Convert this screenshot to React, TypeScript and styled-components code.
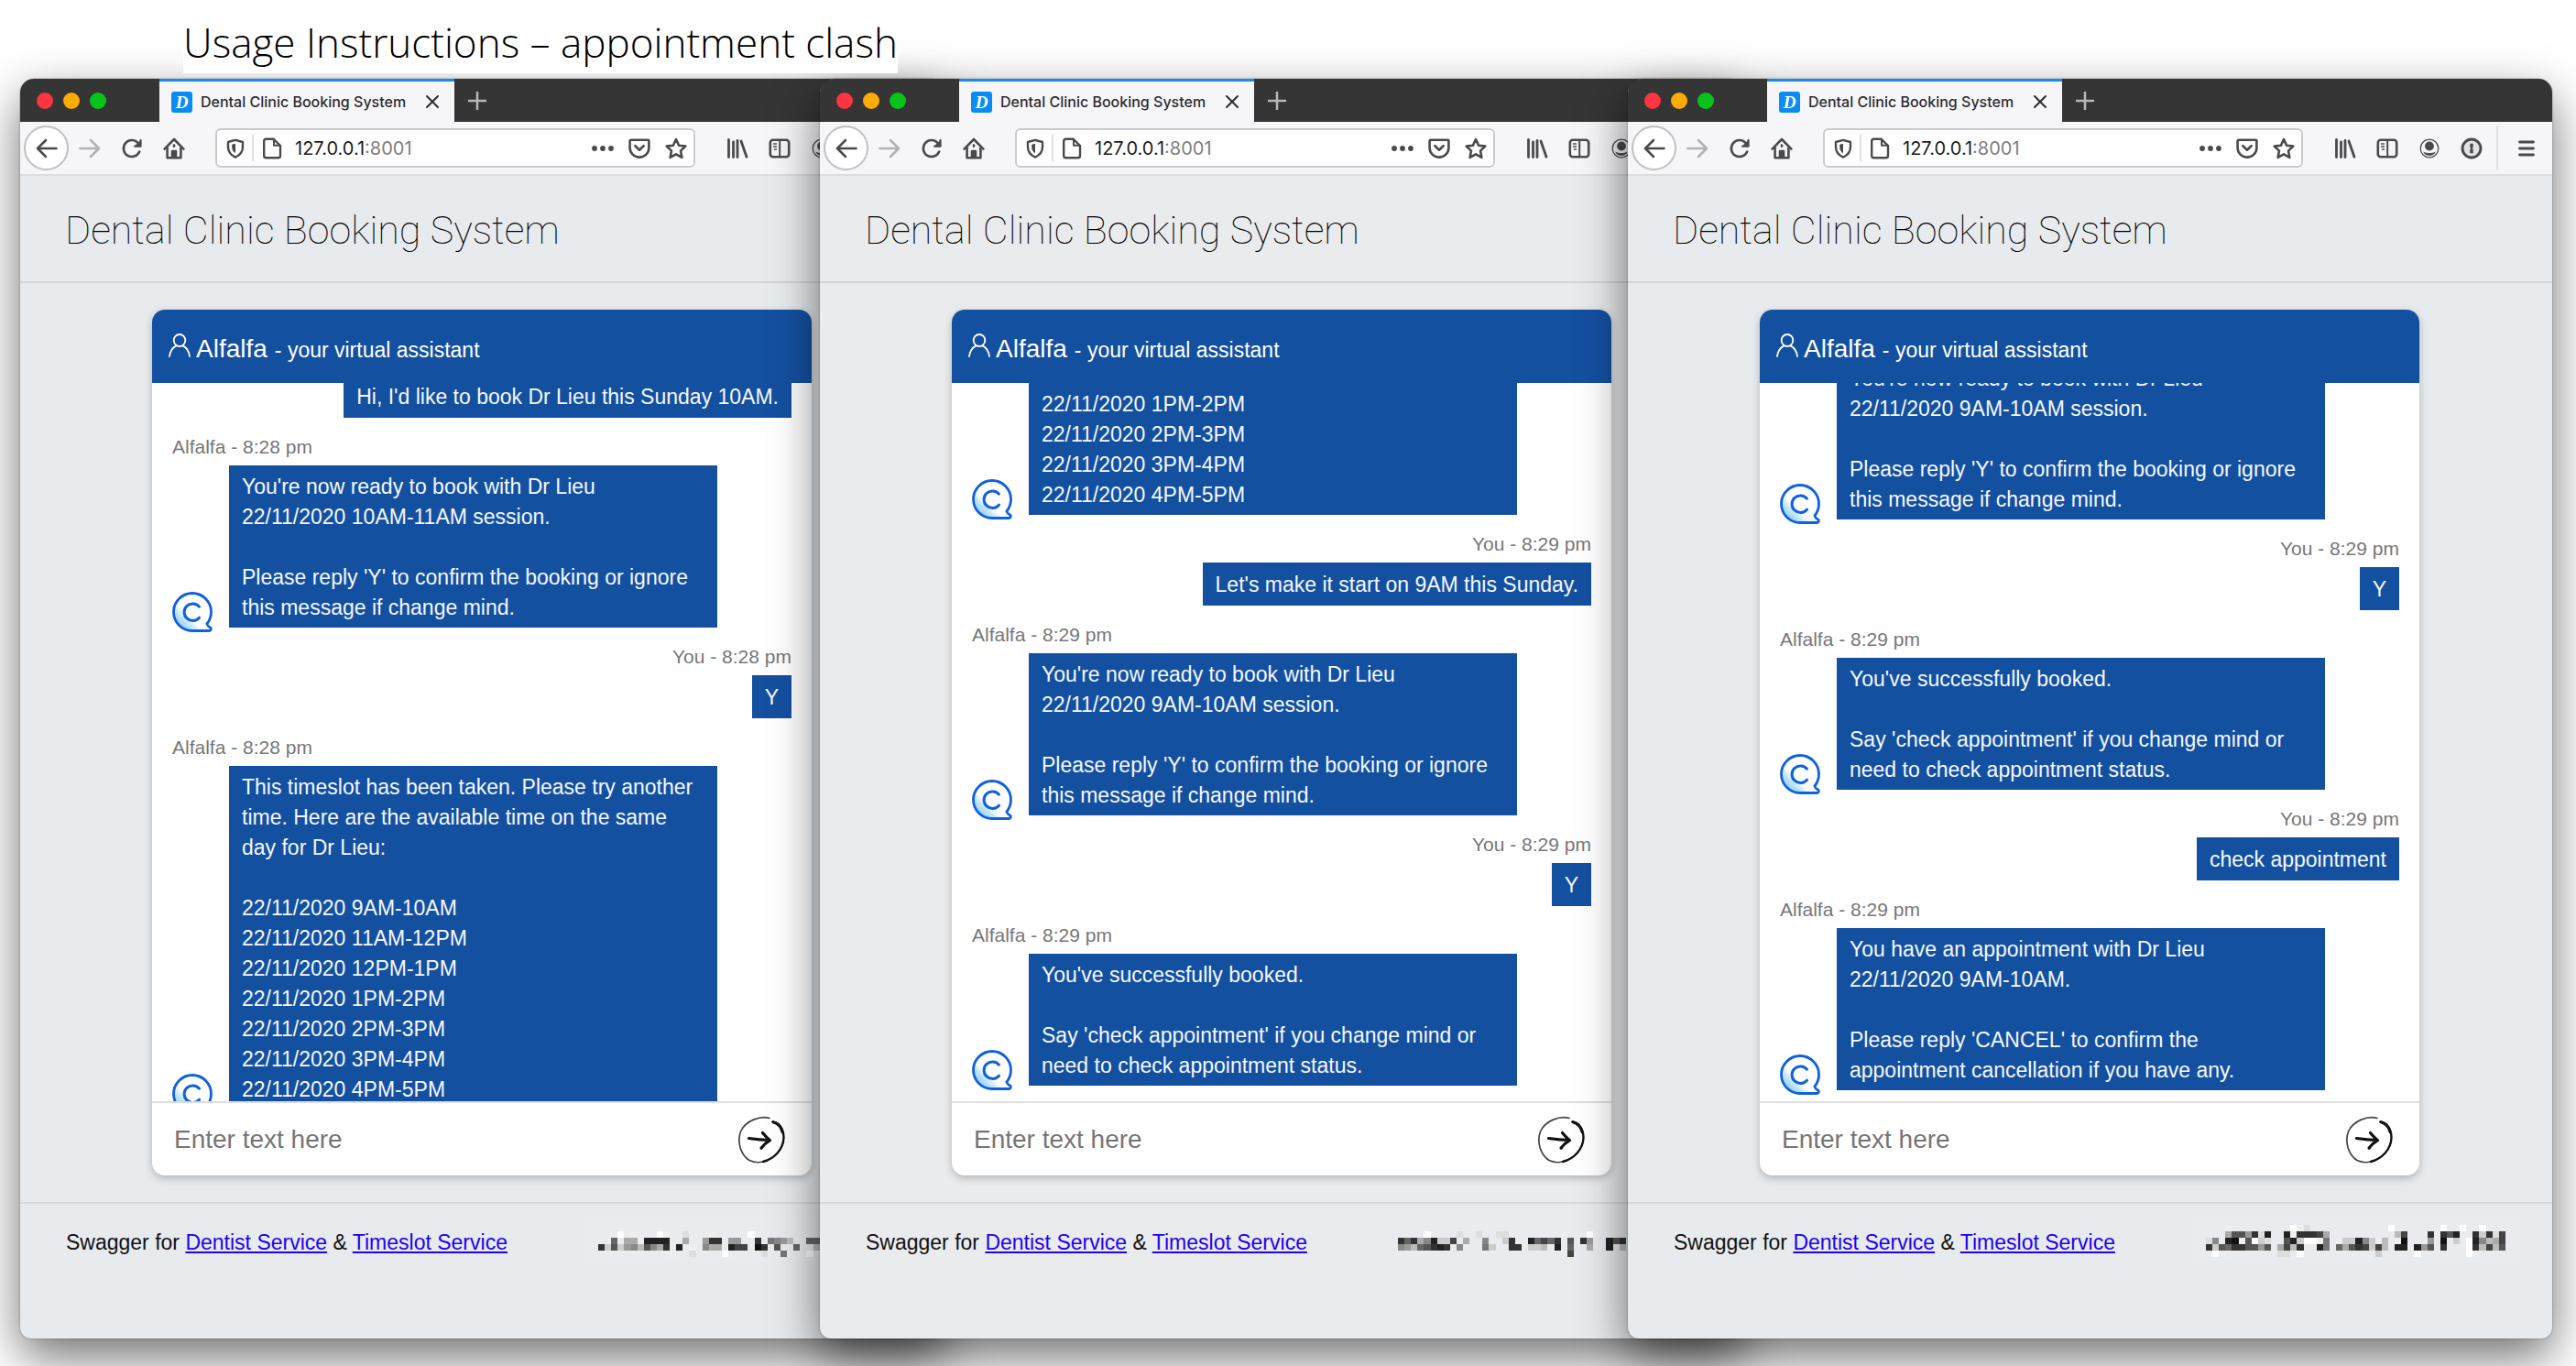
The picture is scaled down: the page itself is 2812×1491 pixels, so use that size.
import React, { useId, useLayoutEffect, useRef } from "react";
import styled, { createGlobalStyle } from "styled-components";

const sans = `"Liberation Sans", Arial, Helvetica, sans-serif`;
const ui = `Inter, Roboto, sans-serif`;
const brand = "#1450a0";
const ink = "#4a4a4d";

const GlobalStyle = createGlobalStyle`
  *, *::before, *::after { box-sizing: border-box; }
  body { margin: 0; background: #fff; font-family: ${sans}; }
  button { margin: 0; padding: 0; border: 0; background: none; color: inherit; cursor: pointer; }
  svg { display: block; flex: none; }
`;

const Desktop = styled.main`
  display: flex;
  flex-direction: column;
  height: 100vh;
  min-height: 900px;
  padding-bottom: 30px;
  overflow: hidden;
`;

const SlideTitle = styled.h1`
  position: relative;
  z-index: 1;
  align-self: flex-start;
  margin: 0 0 6px 200px;
  padding-top: 14px;
  height: 80px;
  background: #fff;
  color: #000;
  font: 300 44px/64px "Open Sans", "Noto Sans", sans-serif;
  white-space: nowrap;
`;

const Windows = styled.div`
  flex: 1;
  min-height: 0;
  display: grid;
  grid-template-columns: 873fr 882fr 1009fr;
  grid-template-rows: 100%;
  padding: 0 26px 0 22px;
`;

const Frame = styled.section<{ $overlap: number; $tone: string }>`
  position: relative;
  display: flex;
  flex-direction: column;
  min-width: 0;
  margin-right: -${(p) => p.$overlap}px;
  border-radius: 16px 16px 12px 12px;
  background: ${(p) => p.$tone};
  box-shadow: 0 0 2px rgba(0, 0, 0, 0.45), 0 20px 52px rgba(0, 0, 0, 0.56);
`;

const TabStrip = styled.div`
  display: flex;
  align-items: center;
  height: 47px;
  padding-left: 18px;
  border-radius: 15px 15px 0 0;
  background: #353535;
`;

const Lights = styled.div`
  display: flex;
  gap: 11px;
  width: 134px;
`;

const Light = styled.button<{ $color: string }>`
  width: 18px;
  height: 18px;
  border-radius: 50%;
  background: ${(p) => p.$color};
`;

const Tab = styled.div`
  display: flex;
  align-items: center;
  width: 322px;
  height: 47px;
  padding: 0 16px 0 13px;
  border-top: 3px solid #1b8ce6;
  background: #f6f6f9;
  color: #2c2c2e;
  font: 500 16px/24px ${ui};
`;

const Favicon = styled.span`
  display: grid;
  place-items: center;
  width: 23px;
  height: 23px;
  margin-right: 9px;
  border-radius: 3px;
  background: #0a8cf2;
  color: #fff;
  font: italic 700 19px/23px "Liberation Serif", serif;
`;

const TabName = styled.span`
  flex: 1;
  white-space: nowrap;
`;

const NewTab = styled.button`
  display: grid;
  place-items: center;
  width: 50px;
  height: 47px;
`;

const Toolbar = styled.div`
  display: flex;
  align-items: center;
  height: 59px;
  padding: 0 5px 0 4px;
  border-bottom: 2px solid #dddde0;
  background: #f6f6f9;
  color: ${ink};
`;

const BackButton = styled.button`
  display: grid;
  place-items: center;
  flex: none;
  width: 49px;
  height: 49px;
  border: 2px solid #c0c0c2;
  border-radius: 50%;
  background: #fff;
`;

const ToolButton = styled.button<{ $dim?: boolean }>`
  display: grid;
  place-items: center;
  flex: none;
  width: 46px;
  height: 46px;
  color: ${(p) => (p.$dim ? "#b2b2b4" : ink)};
`;

const Address = styled.div`
  display: flex;
  align-items: center;
  flex: 1;
  min-width: 0;
  height: 43px;
  margin: 0 23px 0 22px;
  padding: 0 7px 0 8px;
  border: 2px solid #cbcbcd;
  border-radius: 6px;
  background: #fff;
`;

const Rule = styled.span<{ $tall?: boolean }>`
  flex: none;
  width: 2px;
  height: ${(p) => (p.$tall ? 49 : 29)}px;
  margin: 0 8px 0 ${(p) => (p.$tall ? 4 : 6)}px;
  background: #dfdfe1;
`;

const Url = styled.div`
  flex: 1;
  margin-left: 13px;
  color: #7e7e80;
  font: 400 20px/28px ${ui};
  outline: none;
  white-space: nowrap;
`;

const Host = styled.span`
  color: #1c1c1e;
`;

const AddressActions = styled.div`
  display: flex;
  gap: 16px;
`;

const PageHeader = styled.header`
  height: 117px;
  padding: 32px 50px 0 49px;
  border-bottom: 2px solid #d3d6d8;
`;

const PageTitle = styled.h2`
  margin: 0;
  color: #000;
  font: 100 43px/54px Roboto, Inter, sans-serif;
  white-space: nowrap;
`;

const PageMain = styled.div`
  flex: 1;
  min-height: 0;
  display: flex;
  justify-content: center;
  padding: 29px 21px 29px 20px;
`;

const Card = styled.article`
  display: flex;
  flex-direction: column;
  width: 720px;
  border-radius: 14px;
  background: #fff;
  box-shadow: 0 3px 8px rgba(0, 0, 0, 0.24);
  overflow: hidden;
`;

const CardHeader = styled.header`
  display: flex;
  align-items: baseline;
  flex: none;
  height: 80px;
  padding: 25px 18px 0;
  background: ${brand};
  color: #fff;
`;

const BotName = styled.span`
  margin: 0 8px 0 6px;
  font: 28px/36px ${sans};
`;

const BotRole = styled.span`
  font: 23px/36px ${sans};
`;

const Log = styled.div`
  flex: 1;
  min-height: 0;
  overflow: hidden;
`;

const LogInner = styled.div`
  display: flex;
  flex-direction: column;
  padding: 0 22px 24px;
`;

const Stamp = styled.div<{ $mine: boolean }>`
  margin: 20px 0 8px;
  color: #777;
  font: 21px/24px ${sans};
  text-align: ${(p) => (p.$mine ? "right" : "left")};
`;

const Row = styled.div<{ $mine: boolean }>`
  display: flex;
  align-items: flex-end;
  justify-content: ${(p) => (p.$mine ? "flex-end" : "flex-start")};
  gap: 18px;
  padding-right: ${(p) => (p.$mine ? 0 : 81)}px;
`;

const AvatarSlot = styled.div`
  height: 39px;
`;

const Bubble = styled.p<{ $mine: boolean }>`
  display: flex;
  align-items: center;
  flex: ${(p) => (p.$mine ? "none" : "1")};
  min-height: 47px;
  margin: 0;
  padding: 7px 14px 5px;
  background: ${brand};
  color: #f4f8ff;
  font: 23px/33px ${sans};
  white-space: pre-line;
`;

const Composer = styled.form`
  display: flex;
  align-items: center;
  flex: none;
  height: 81px;
  padding: 0 29px 0 22px;
  border-top: 2px solid #dedede;
`;

const Entry = styled.input`
  flex: 1;
  min-width: 0;
  padding: 2px;
  border: 0;
  outline: 0;
  background: none;
  color: #222;
  font: 28px/36px ${sans};
  &::placeholder { color: #757575; opacity: 1; }
`;

const PageFooter = styled.footer`
  display: flex;
  align-items: flex-start;
  justify-content: space-between;
  height: 149px;
  padding: 11px 36px 0 50px;
  border-top: 2px solid #d7dadc;
`;

const Services = styled.p`
  margin: 0;
  padding-top: 13px;
  color: #111;
  font: 23px/36px ${sans};
  white-space: nowrap;
`;

const ServiceLink = styled.a`
  color: #2200f0;
  text-decoration: underline;
`;

const Redacted = styled.div`
  display: flex;
  align-items: flex-end;
  height: 52px;
  padding: 0 8px 5px 14px;
  background: #eaebee;
`;

type IconProps = { children: React.ReactNode; size?: number };

const Icon = ({ children, size = 24 }: IconProps) => (
  <svg
    width={size}
    height={size}
    viewBox="0 0 24 24"
    fill="none"
    stroke="currentColor"
    strokeWidth="2.6"
    strokeLinecap="round"
    strokeLinejoin="round"
    aria-hidden="true"
  >
    {children}
  </svg>
);

const BackIcon = () => <Icon><path d="M22.5 12H2.5M11 3 2 12l9 9" /></Icon>;
const ForwardIcon = () => <Icon><path d="M1.5 12h20M13 3l9 9-9 9" /></Icon>;
const ReloadIcon = () => (
  <Icon>
    <path d="M20.2 15.5A9 9 0 1 1 18.4 5.8" />
    <path d="M22.4 2v8.6h-8.6z" fill="currentColor" stroke="none" />
    <path d="M21.4 3v6.6h-6.2" strokeWidth="2" />
  </Icon>
);
const HomeIcon = () => (
  <Icon>
    <path d="M1.6 12.6 12 2l10.4 10.6" />
    <path d="M4.6 11.5v10.7h14.8V11.5" />
    <path d="M10 22v-7h4v7" fill="currentColor" />
    <path d="M12 8.6v1.2" />
  </Icon>
);
const ShieldIcon = () => (
  <Icon>
    <path d="M12 2.8 20 5v5.6c0 5-3 8.8-8 11-5-2.2-8-6-8-11V5z" strokeWidth="2.4" />
    <path d="M12 6.8v10.4c-2.4-1.4-3.8-3.8-3.8-6.8V7.8z" fill="currentColor" stroke="none" />
  </Icon>
);
const DocumentIcon = () => (
  <Icon>
    <path d="M5.5 1.8h8.2L21 9v11a2.3 2.3 0 0 1-2.3 2.3H5.5A2.3 2.3 0 0 1 3.2 20V4.1a2.3 2.3 0 0 1 2.3-2.3z" strokeWidth="2.4" />
    <path d="M14 2v6.8h6.8" strokeWidth="2" />
  </Icon>
);
const DotsIcon = () => (
  <Icon>
    <g fill="currentColor" stroke="none">
      <circle cx="3" cy="12" r="2.9" />
      <circle cx="12" cy="12" r="2.9" />
      <circle cx="21" cy="12" r="2.9" />
    </g>
  </Icon>
);
const PocketIcon = () => (
  <Icon>
    <path d="M2.6 2.8h18.8a1 1 0 0 1 1 1v7.4a10.4 10.4 0 0 1-20.8 0V3.8a1 1 0 0 1 1-1z" />
    <path d="m7.4 9.2 4.6 4.5 4.6-4.5" />
  </Icon>
);
const StarIcon = () => (
  <Icon>
    <path d="m12 2 3.1 6.7 7.2.9-5.3 5 1.4 7.3L12 18.3l-6.4 3.6L7 14.6l-5.3-5 7.2-.9z" />
  </Icon>
);
const LibraryIcon = () => (
  <Icon>
    <path d="M2.5 2.5v19M7.5 5v16.5M12 3.5v18M16 4l6 17.3" strokeWidth="2.8" />
  </Icon>
);
const SidebarIcon = () => (
  <Icon>
    <rect x="1.8" y="2.8" width="20.4" height="18.4" rx="3" />
    <path d="M12.2 3v18" strokeWidth="2" />
    <path d="M5.5 7h3M5.5 10h3M6.5 13h2" strokeWidth="1.4" />
  </Icon>
);
const AccountIcon = () => (
  <Icon>
    <circle cx="12" cy="12" r="9.8" strokeWidth="1.3" />
    <circle cx="12" cy="9.5" r="4.9" fill="currentColor" stroke="none" />
    <path d="M5.2 15.5c4.2 2.2 9.4 2.2 13.6 0-1 2.8-3.8 4.5-6.8 4.5s-5.8-1.7-6.8-4.5z" fill="currentColor" stroke="none" />
  </Icon>
);
const KeyholeIcon = () => (
  <Icon>
    <circle cx="12" cy="12" r="10" fill="#e2e2e4" strokeWidth="2.9" />
    <path d="M10.3 6.8h3.4v4l-1 1.2 1 1.2v4h-3.4v-4l1-1.2-1-1.2z" fill="currentColor" stroke="none" />
  </Icon>
);
const MenuIcon = () => <Icon><path d="M4.5 5h15M4.5 12h15M4.5 19h15" strokeWidth="2.8" /></Icon>;
const CloseIcon = () => <Icon size={16}><path d="M3 3l18 18M21 3 3 21" strokeWidth="3" /></Icon>;
const PlusIcon = () => <Icon size={20}><path d="M12 1v22M1 12h22" stroke="#b9b9b9" strokeWidth="3" /></Icon>;

const PersonIcon = () => (
  <svg width="24" height="26" viewBox="0 0 24 26" fill="none" stroke="#fff" strokeWidth="1.8" strokeLinecap="round" aria-hidden="true">
    <ellipse cx="12" cy="7.5" rx="6.3" ry="6.5" />
    <path d="M1 25c.8-5.8 3.6-9.6 7.4-11.6M23 25c-.8-5.8-3.6-9.6-7.4-11.6" />
  </svg>
);

const BotAvatar = () => {
  const id = useId();
  return (
    <svg width="44" height="44" viewBox="0 0 44 44" role="img" aria-label="Alfalfa">
      <defs>
        <linearGradient id={id} x1="0.1" y1="0.9" x2="0.7" y2="0.3">
          <stop offset="0" stopColor="#7cc8f8" />
          <stop offset="0.35" stopColor="#cdeafd" />
          <stop offset="0.5" stopColor="#fff" />
        </linearGradient>
      </defs>
      <path
        d="M22 1.5c11.3 0 20.5 9.2 20.5 20.5 0 5-1.7 9.5-4.6 13 .5 1.8 1.7 3 3.6 4 1.4.9.9 3.5-1 3.5H22C10.7 42.5 1.5 33.3 1.5 22S10.7 1.5 22 1.5z"
        fill={`url(#${id})`}
        stroke="#1160dc"
        strokeWidth="2.8"
      />
      <path d="M29.5 16.2a9.3 9.3 0 1 0 0 12" fill="none" stroke="#1160dc" strokeWidth="3" strokeLinecap="round" />
    </svg>
  );
};

const SendIcon = () => (
  <svg width="52" height="52" viewBox="0 0 52 52" fill="none" stroke="#111" strokeLinecap="round" strokeLinejoin="round" aria-hidden="true">
    <path d="M35 2.5C25-.5 9 5 3.5 17-.5 28 3 42 13 48.5c5 2.5 11 2.5 15 1.5" strokeWidth="1.7" stroke="#444" />
    <path d="M28 50c13-3.5 22-14 22.5-26C50.5 15 46 7.5 38.5 6.5" strokeWidth="2.4" />
    <path d="M39 6.800c5 1.2 8.5 5 10.2 11" strokeWidth="3" />
    <path d="M12.5 24.5c7 1 14 1.8 22.5 2M27.5 18.5c2.5 3 5 5.8 8 8.2-4 2.3-7 5-9.500 8.500" strokeWidth="3.2" />
  </svg>
);

/* Each row is a string of grey levels (hex digit), a dot leaves the cell empty. */
const Mosaic = ({ rows }: { rows: string[] }) => (
  <svg
    width="334"
    height={rows.length * 7}
    viewBox={`0 0 47 ${rows.length}`}
    preserveAspectRatio="none"
    shapeRendering="crispEdges"
    role="img"
    aria-label="Redacted"
  >
    {rows.flatMap((row, y) =>
      [...row].map((level, x) =>
        level === "." ? null : <rect key={`${x}-${y}`} x={x} y={y} width="1" height="1" fill={`#${level}${level}${level}`} />
      )
    )}
  </svg>
);

type Message = { from: "Alfalfa" | "You"; time: string; text: string };
type Session = { overlap: number; tone: string; scroll: number; messages: Message[]; mosaic: string[] };

const bot = (time: string, text: string): Message => ({ from: "Alfalfa", time, text });
const you = (time: string, text: string): Message => ({ from: "You", time, text });

const taken = `This timeslot has been taken. Please try another
time. Here are the available time on the same
day for Dr Lieu:

22/11/2020 9AM-10AM
22/11/2020 11AM-12PM
22/11/2020 12PM-1PM
22/11/2020 1PM-2PM
22/11/2020 2PM-3PM
22/11/2020 3PM-4PM
22/11/2020 4PM-5PM`;

const ready = (slot: string) => `You're now ready to book with Dr Lieu
22/11/2020 ${slot} session.

Please reply 'Y' to confirm the booking or ignore
this message if change mind.`;

const booked = `You've successfully booked.

Say 'check appointment' if you change mind or
need to check appointment status.`;

const appointment = `You have an appointment with Dr Lieu
22/11/2020 9AM-10AM.

Please reply 'CANCEL' to confirm the
appointment cancellation if you have any.`;

const sessions: Session[] = [
  {
    overlap: 136,
    tone: "#e7ebee",
    scroll: 61,
    messages: [
      you("8:28 pm", "Hi, I'd like to book Dr Lieu this Sunday 10AM."),
      bot("8:28 pm", ready("10AM-11AM")),
      you("8:28 pm", "Y"),
      bot("8:28 pm", taken),
    ],
    mosaic: [
      "...f.e...fe..d...e.....f.......",
      "..6.aae2222..a..933.99..3.789b..66.",
      "3c5c98b58a3.2.e.8aa.244.13.5..6..b.",
      "...........e..d....f.....d..7e..f..",
    ],
  },
  {
    overlap: 127,
    tone: "#eaebed",
    scroll: 283,
    messages: [
      bot("8:28 pm", taken),
      you("8:29 pm", "Let's make it start on 9AM this Sunday."),
      bot("8:29 pm", ready("9AM-10AM")),
      you("8:29 pm", "Y"),
      bot("8:29 pm", booked),
    ],
    mosaic: [
      "....f....d..d..dd........e...f",
      "363a82cc4.a..8..c3..26463.5.39..253",
      "89b65323.8...7c..33.ccb.2.6..a..2.b",
      "..........................4........",
    ],
  },
  {
    overlap: 0,
    tone: "#e7ebee",
    scroll: 80,
    messages: [
      bot("8:29 pm", ready("9AM-10AM")),
      you("8:29 pm", "Y"),
      bot("8:29 pm", booked),
      you("8:29 pm", "check appointment"),
      bot("8:29 pm", appointment),
    ],
    mosaic: [
      "...e.........fed............f.......f..f..f",
      "...a5593d2..2e3334a..........b4...3.352..3c3d4.",
      "d8.21e5fcd..52cffe7.ecc28ceb.e1...9.1.c.f28ba4.",
      "3c56335595.a4b3..27.6a534c4b.22e295.3...f3b4b5.",
      ".fe........dd.f...........c.....f.......fe.....",
    ],
  },
];

const Conversation = ({ messages, scroll }: { messages: Message[]; scroll: number }) => {
  const log = useRef<HTMLDivElement>(null);
  useLayoutEffect(() => {
    if (log.current) log.current.scrollTop = scroll;
  }, [scroll]);
  return (
    <Log ref={log}>
      <LogInner>
        {messages.map((m, i) => {
          const mine = m.from === "You";
          return (
            <div key={i}>
              <Stamp $mine={mine}>{m.from} - {m.time}</Stamp>
              <Row $mine={mine}>
                {!mine && <AvatarSlot><BotAvatar /></AvatarSlot>}
                <Bubble $mine={mine}>{m.text}</Bubble>
              </Row>
            </div>
          );
        })}
      </LogInner>
    </Log>
  );
};

const BrowserWindow = ({ session }: { session: Session }) => (
  <Frame $overlap={session.overlap} $tone={session.tone}>
    <TabStrip>
      <Lights>
        <Light $color="#fc3540" aria-label="Close window" />
        <Light $color="#fdab05" aria-label="Minimise window" />
        <Light $color="#08c41a" aria-label="Zoom window" />
      </Lights>
      <Tab>
        <Favicon aria-hidden="true">D</Favicon>
        <TabName>Dental Clinic Booking System</TabName>
        <button aria-label="Close tab"><CloseIcon /></button>
      </Tab>
      <NewTab aria-label="New tab"><PlusIcon /></NewTab>
    </TabStrip>
    <Toolbar>
      <BackButton aria-label="Back"><BackIcon /></BackButton>
      <ToolButton $dim aria-label="Forward"><ForwardIcon /></ToolButton>
      <ToolButton aria-label="Reload"><ReloadIcon /></ToolButton>
      <ToolButton aria-label="Home"><HomeIcon /></ToolButton>
      <Address>
        <button aria-label="Tracking protection"><ShieldIcon /></button>
        <Rule />
        <button aria-label="Site information"><DocumentIcon /></button>
        <Url role="textbox" aria-label="Address" contentEditable suppressContentEditableWarning spellCheck={false}>
          <Host>127.0.0.1</Host>:8001
        </Url>
        <AddressActions>
          <button aria-label="Page actions"><DotsIcon /></button>
          <button aria-label="Save to Pocket"><PocketIcon /></button>
          <button aria-label="Bookmark"><StarIcon /></button>
        </AddressActions>
      </Address>
      <ToolButton aria-label="Library"><LibraryIcon /></ToolButton>
      <ToolButton aria-label="Sidebars"><SidebarIcon /></ToolButton>
      <ToolButton aria-label="Account"><AccountIcon /></ToolButton>
      <ToolButton aria-label="Passwords"><KeyholeIcon /></ToolButton>
      <Rule $tall />
      <ToolButton aria-label="Menu"><MenuIcon /></ToolButton>
    </Toolbar>
    <PageHeader>
      <PageTitle>Dental Clinic Booking System</PageTitle>
    </PageHeader>
    <PageMain>
      <Card>
        <CardHeader>
          <PersonIcon />
          <BotName>Alfalfa</BotName>
          <BotRole>- your virtual assistant</BotRole>
        </CardHeader>
        <Conversation messages={session.messages} scroll={session.scroll} />
        <Composer onSubmit={(e) => e.preventDefault()}>
          <Entry type="text" aria-label="Message" placeholder="Enter text here" />
          <button type="submit" aria-label="Send"><SendIcon /></button>
        </Composer>
      </Card>
    </PageMain>
    <PageFooter>
      <Services>
        Swagger for <ServiceLink href="#dentist">Dentist Service</ServiceLink> &amp;{" "}
        <ServiceLink href="#timeslot">Timeslot Service</ServiceLink>
      </Services>
      <Redacted><Mosaic rows={session.mosaic} /></Redacted>
    </PageFooter>
  </Frame>
);

export default function App() {
  return (
    <>
      <GlobalStyle />
      <Desktop>
        <SlideTitle>Usage Instructions – appointment clash</SlideTitle>
        <Windows>
          {sessions.map((session, i) => (
            <BrowserWindow key={i} session={session} />
          ))}
        </Windows>
      </Desktop>
    </>
  );
}
